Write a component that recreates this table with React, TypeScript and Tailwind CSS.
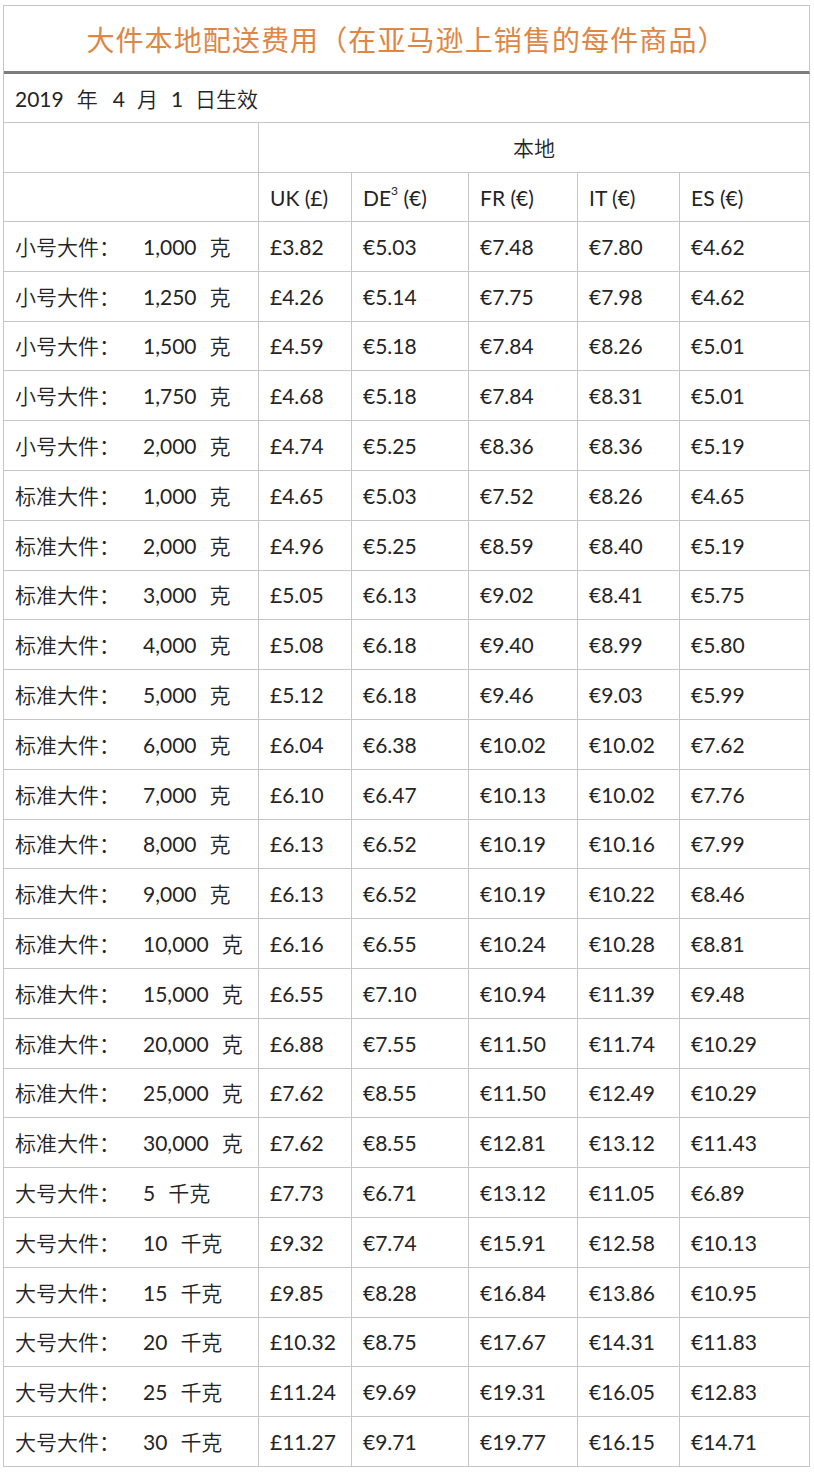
import React from "react";

const widths = ["w-[255px]", "w-[93px]", "w-[117px]", "w-[109px]", "w-[102px]", "w-[130px]"];

type Row = [string, string, string, string[]];

const rows: Row[] = [
  ["小号大件：", "1,000", "克", ["£3.82", "€5.03", "€7.48", "€7.80", "€4.62"]],
  ["小号大件：", "1,250", "克", ["£4.26", "€5.14", "€7.75", "€7.98", "€4.62"]],
  ["小号大件：", "1,500", "克", ["£4.59", "€5.18", "€7.84", "€8.26", "€5.01"]],
  ["小号大件：", "1,750", "克", ["£4.68", "€5.18", "€7.84", "€8.31", "€5.01"]],
  ["小号大件：", "2,000", "克", ["£4.74", "€5.25", "€8.36", "€8.36", "€5.19"]],
  ["标准大件：", "1,000", "克", ["£4.65", "€5.03", "€7.52", "€8.26", "€4.65"]],
  ["标准大件：", "2,000", "克", ["£4.96", "€5.25", "€8.59", "€8.40", "€5.19"]],
  ["标准大件：", "3,000", "克", ["£5.05", "€6.13", "€9.02", "€8.41", "€5.75"]],
  ["标准大件：", "4,000", "克", ["£5.08", "€6.18", "€9.40", "€8.99", "€5.80"]],
  ["标准大件：", "5,000", "克", ["£5.12", "€6.18", "€9.46", "€9.03", "€5.99"]],
  ["标准大件：", "6,000", "克", ["£6.04", "€6.38", "€10.02", "€10.02", "€7.62"]],
  ["标准大件：", "7,000", "克", ["£6.10", "€6.47", "€10.13", "€10.02", "€7.76"]],
  ["标准大件：", "8,000", "克", ["£6.13", "€6.52", "€10.19", "€10.16", "€7.99"]],
  ["标准大件：", "9,000", "克", ["£6.13", "€6.52", "€10.19", "€10.22", "€8.46"]],
  ["标准大件：", "10,000", "克", ["£6.16", "€6.55", "€10.24", "€10.28", "€8.81"]],
  ["标准大件：", "15,000", "克", ["£6.55", "€7.10", "€10.94", "€11.39", "€9.48"]],
  ["标准大件：", "20,000", "克", ["£6.88", "€7.55", "€11.50", "€11.74", "€10.29"]],
  ["标准大件：", "25,000", "克", ["£7.62", "€8.55", "€11.50", "€12.49", "€10.29"]],
  ["标准大件：", "30,000", "克", ["£7.62", "€8.55", "€12.81", "€13.12", "€11.43"]],
  ["大号大件：", "5", "千克", ["£7.73", "€6.71", "€13.12", "€11.05", "€6.89"]],
  ["大号大件：", "10", "千克", ["£9.32", "€7.74", "€15.91", "€12.58", "€10.13"]],
  ["大号大件：", "15", "千克", ["£9.85", "€8.28", "€16.84", "€13.86", "€10.95"]],
  ["大号大件：", "20", "千克", ["£10.32", "€8.75", "€17.67", "€14.31", "€11.83"]],
  ["大号大件：", "25", "千克", ["£11.24", "€9.69", "€19.31", "€16.05", "€12.83"]],
  ["大号大件：", "30", "千克", ["£11.27", "€9.71", "€19.77", "€16.15", "€14.71"]],
];

const cell = "flex items-center pl-[11px] border-r border-b border-[#c6c6c6] box-border";

function Zh({ children, className = "" }: { children: React.ReactNode; className?: string }) {
  return <span className={`font-[350] ${className}`}>{children}</span>;
}

export default function App() {
  return (
    <div
      className="bg-white min-h-[1476px] w-[814px] pt-[5px] pl-[3px] text-[#242424] font-normal"
      style={{ fontFamily: '"Lato", "Noto Sans CJK SC", sans-serif' }}
    >
      <div className="w-[807px] border-l border-t border-[#c6c6c6] text-[21px] leading-none">
        <div className="h-[68px] flex items-center justify-center border-r border-b-[3px] border-r-[#c6c6c6] border-b-[#7c7c7c] box-border">
          <span
            className="text-[28px] text-[#de8644] tracking-[1.1px] font-normal"
            style={{ fontFamily: '"Noto Sans CJK SC", sans-serif' }}
          >
            大件本地配送费用（在亚马逊上销售的每件商品）
          </span>
        </div>
        <div className={`h-[49px] ${cell}`}>
          <span>2019</span>
          <Zh className="ml-[13px]">年</Zh>
          <span className="ml-[15px]">4</span>
          <Zh className="ml-[12px]">月</Zh>
          <span className="ml-[13px]">1</span>
          <Zh className="ml-[12px]">日生效</Zh>
        </div>
        <div className="flex h-[50px]">
          <div className={`${widths[0]} ${cell}`} />
          <div className="w-[551px] flex items-center justify-center border-r border-b border-[#c6c6c6] box-border">
            <Zh>本地</Zh>
          </div>
        </div>
        <div className="flex h-[49px]">
          <div className={`${widths[0]} ${cell}`} />
          <div className={`${widths[1]} ${cell}`}>UK (£)</div>
          <div className={`${widths[2]} ${cell}`}>
            DE<sup className="text-[12px] relative -top-[6px]">3</sup>&nbsp;(€)
          </div>
          <div className={`${widths[3]} ${cell}`}>FR (€)</div>
          <div className={`${widths[4]} ${cell}`}>IT (€)</div>
          <div className={`${widths[5]} ${cell}`}>ES (€)</div>
        </div>
        {rows.map((r, i) => (
          <div key={i} className="flex h-[49.8px]">
            <div className={`${widths[0]} ${cell}`}>
              <Zh className="w-[128px] shrink-0">{r[0]}</Zh>
              <span>{r[1]}</span>
              <Zh className="ml-[13px]">{r[2]}</Zh>
            </div>
            {r[3].map((v, j) => (
              <div key={j} className={`${widths[j + 1]} ${cell}`}>
                {v}
              </div>
            ))}
          </div>
        ))}
      </div>
    </div>
  );
}
